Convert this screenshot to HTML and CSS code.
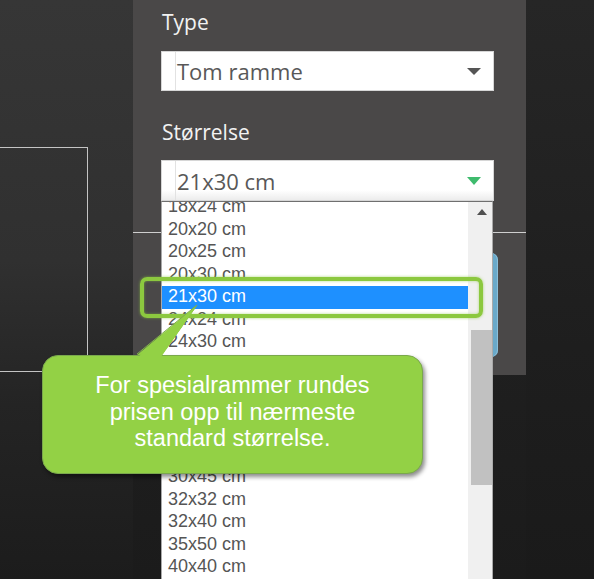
FILE: index.html
```html
<!DOCTYPE html>
<html lang="no">
<head>
<meta charset="utf-8">
<title>Størrelse</title>
<link rel="stylesheet" href="styles.css">
</head>
<body>
<div class="scene">
  <div class="stage">
    <div class="frame-preview"></div>
  </div>
  <div class="panel">
    <div class="field-label">Type</div>
    <div class="select">
      <span class="select-gutter"></span>
      <span class="select-value">Tom ramme</span>
      <span class="caret"></span>
    </div>
    <div class="field-label field-label-second">Størrelse</div>
    <div class="select select-open">
      <span class="select-gutter"></span>
      <span class="select-value">21x30 cm</span>
      <span class="caret caret-green"></span>
    </div>
    <div class="divider"></div>
    <div class="btn-blue"></div>
  </div>
  <div class="side"></div>
</div>

<div class="dropdown">
  <ul class="options">
    <li>18x24 cm</li>
    <li>20x20 cm</li>
    <li>20x25 cm</li>
    <li>20x30 cm</li>
    <li class="selected">21x30 cm</li>
    <li>24x24 cm</li>
    <li>24x30 cm</li>
    <li>25x25 cm</li>
    <li>28x35 cm</li>
    <li>30x30 cm</li>
    <li>30x40 cm</li>
    <li>30x42 cm</li>
    <li>30x45 cm</li>
    <li>32x32 cm</li>
    <li>32x40 cm</li>
    <li>35x50 cm</li>
    <li>40x40 cm</li>
    <li>40x50 cm</li>
  </ul>
  <div class="scrollbar">
    <div class="scroll-up"><span class="scroll-arrow"></span></div>
    <div class="scroll-thumb"></div>
  </div>
</div>

<div class="focus-ring"></div>

<svg class="callout-tail" width="80" height="60" viewBox="0 0 80 60">
  <polygon points="3,56 63,6 28,56" fill="#93d145"/>
  <polyline points="3,55 63,6 28,55" fill="none" stroke="#7fae4c" stroke-width="1"/>
</svg>
<div class="callout">
  <p class="callout-text">For spesialrammer rundes<br>prisen opp til nærmeste<br>standard størrelse.</p>
</div>
<svg class="callout-tail callout-tail-fill" width="80" height="60" viewBox="0 0 80 60">
  <polygon points="4,58 62,8 27,58" fill="#93d145"/>
</svg>
</body>
</html>
```
FILE: styles.css
```css
* { box-sizing: border-box; }
html, body { margin: 0; padding: 0; }
body {
  width: 594px;
  height: 579px;
  overflow: hidden;
  background: linear-gradient(to bottom, #252525 0%, #1b1b1b 100%);
  font-family: "Open Sans", "Liberation Sans", sans-serif;
  position: relative;
}
.scene {
  display: flex;
  align-items: flex-start;
  height: 579px;
}
.stage {
  width: 133px;
  height: 579px;
  flex: none;
  position: relative;
  background: linear-gradient(to bottom, #363636 0%, #303030 45%, #242424 70%, #1c1c1c 100%);
}
.frame-preview {
  position: absolute;
  left: -10px;
  top: 147px;
  width: 98px;
  height: 225px;
  border: 1px solid #c4c4c4;
}
.panel {
  width: 393px;
  height: 375px;
  flex: none;
  background: #4a4848;
  padding: 8px 32px 0 28px;
  display: flex;
  flex-direction: column;
}
.side {
  flex: 1;
  height: 579px;
  background: linear-gradient(to bottom, #262626 0%, #1e1e1e 60%, #1a1a1a 100%);
}
.field-label {
  font-size: 21px;
  line-height: 28px;
  height: 28px;
  color: #f2f2f2;
  padding-left: 1px;
}
.field-label-second { margin-top: 27px; }
.select {
  margin-top: 15px;
  height: 40px;
  background: #fff;
  border: 1px solid #d6d6d6;
  display: flex;
  align-items: center;
  padding-right: 12px;
}
.select-open {
  margin-top: 14px;
  height: 41px;
  background: linear-gradient(to bottom, #ffffff 0%, #ffffff 75%, #ececec 100%);
}
.select-gutter {
  width: 14px;
  align-self: stretch;
  border-right: 1px solid #e2e2e2;
  flex: none;
}
.select-value {
  flex: 1;
  padding-left: 1px;
  font-size: 22px;
  line-height: 30px;
  color: #585858;
}
.caret {
  width: 0;
  height: 0;
  border-left: 7px solid transparent;
  border-right: 7px solid transparent;
  border-top: 7px solid #555;
  margin-top: 1px;
}
.caret-green {
  border-top-color: #3fbb6d;
  border-top-width: 8px;
  margin-top: 0;
}
.divider {
  margin: 31px -32px 0 -28px;
  height: 1px;
  background: #cfcfcf;
}
.btn-blue {
  margin-top: 20px;
  width: 337px;
  height: 104px;
  border-radius: 7px;
  background: #6aa9c9;
  box-shadow: inset -1px 0 0 #8dc0da;
}

/* open dropdown list */
.dropdown {
  position: absolute;
  left: 161px;
  top: 201px;
  width: 332px;
  height: 400px;
  background: #fff;
  border: 1px solid #a9a9a9;
  border-top-color: #6f6f6f;
  display: flex;
  overflow: hidden;
}
.options {
  list-style: none;
  margin: -6px 0 0 0;
  padding: 0;
  width: 306px;
  flex: none;
  font-family: "Liberation Sans", Arial, sans-serif;
  font-size: 18px;
}
.options li {
  height: 22.53px;
  line-height: 20px;
  padding-left: 6px;
  color: #555;
  white-space: nowrap;
}
.options li.selected {
  background: #1e90ff;
  color: #fff;
}
.scrollbar {
  flex: 1;
  background: #f0f0f0;
  display: flex;
  flex-direction: column;
  align-items: flex-end;
}
.scroll-up {
  height: 20px;
  width: 21px;
  display: flex;
  align-items: center;
  justify-content: center;
  margin-top: 0;
}
.scroll-arrow {
  width: 0;
  height: 0;
  border-left: 5.5px solid transparent;
  border-right: 5.5px solid transparent;
  border-bottom: 6px solid #505050;
  margin-top: 0;
}
.scroll-thumb {
  margin-top: 108px;
  width: 21px;
  height: 155px;
  background: #c1c1c1;
}

/* annotation overlays */
.focus-ring {
  position: absolute;
  left: 140px;
  top: 277px;
  width: 343px;
  height: 41px;
  border: 4px solid #8cc83f;
  border-radius: 7px;
  box-shadow: 0 0 3px rgba(140, 200, 63, 0.7), inset 0 0 3px rgba(140, 200, 63, 0.6);
}
.callout {
  position: absolute;
  left: 42px;
  top: 355px;
  width: 381px;
  height: 119px;
  background: #93d145;
  border: 1px solid #7aa84c;
  border-radius: 16px;
  box-shadow: 2px 3px 4px rgba(0, 0, 0, 0.45);
  padding-top: 16px;
}
.callout-text {
  margin: 0;
  text-align: center;
  font-family: "Liberation Sans", Arial, sans-serif;
  font-size: 23.5px;
  line-height: 26.5px;
  color: #fff;
}
.callout-tail {
  position: absolute;
  left: 134px;
  top: 299px;
}
.callout-tail-fill {
  z-index: 2;
}
```
